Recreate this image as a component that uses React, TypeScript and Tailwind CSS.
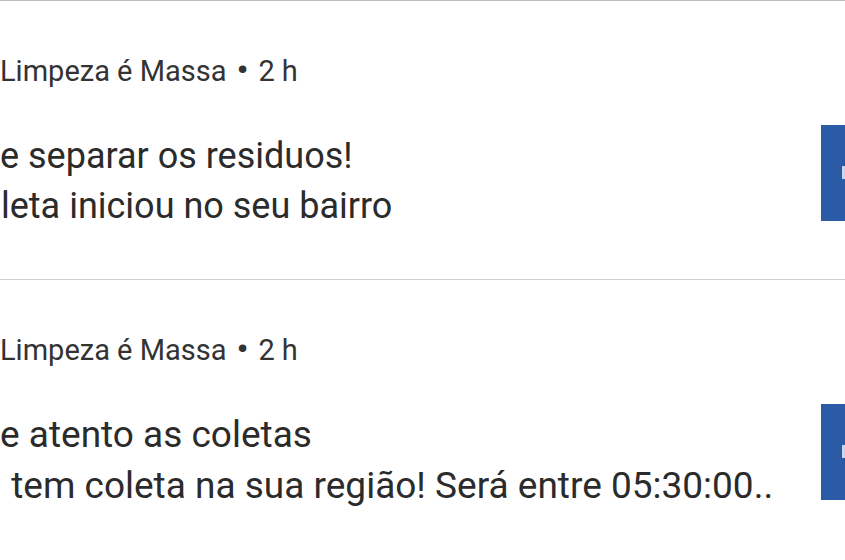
const items = [
  {
    title: 'e separar os residuos!',
    body: 'leta iniciou no seu bairro',
    bodyShift: 'ml-[1px]',
    size: 'text-[36px]',
  },
  {
    title: 'e atento as coletas',
    body: '\u00a0tem coleta na sua região! Será entre 05:30:00..',
    bodyShift: 'ml-[2px]',
    size: 'text-[37px]',
  },
];

const Thumb = () => (
  <div className="relative w-[96px] h-[96px] shrink-0 bg-[#2b5ba6] -mr-[72px]">
    <div className="absolute left-[21px] top-[41px] w-[4px] h-[13px] bg-[#c9d6ea]" />
  </div>
);

const Notification = ({ title, body, bodyShift, size }: (typeof items)[number]) => (
  <div className="h-[278px] flex items-start">
    <div className="flex-1 min-w-0 pt-[51px]">
      <div className="text-[29px] leading-[36px] text-[#333] whitespace-nowrap">
        Limpeza é Massa <span className="mx-[3px] text-[32px] font-bold">•</span> 2 h
      </div>
      <div className={`mt-[42px] leading-[50px] text-[#2b2b2b] whitespace-nowrap ${size}`}>{title}</div>
      <div className={`leading-[51px] text-[#2b2b2b] whitespace-nowrap ${size} ${bodyShift}`}>{body}</div>
    </div>
    <div className="mt-[124px]">
      <Thumb />
    </div>
  </div>
);

export default function App() {
  return (
    <div
      className="w-[845px] h-[560px] overflow-hidden bg-white border-t border-[#bdbdbd]"
      style={{ fontFamily: 'Roboto, "Noto Sans", sans-serif' }}
    >
      <Notification {...items[0]} />
      <div className="h-[1px] bg-[#cfcfcf]" />
      <Notification {...items[1]} />
    </div>
  );
}
